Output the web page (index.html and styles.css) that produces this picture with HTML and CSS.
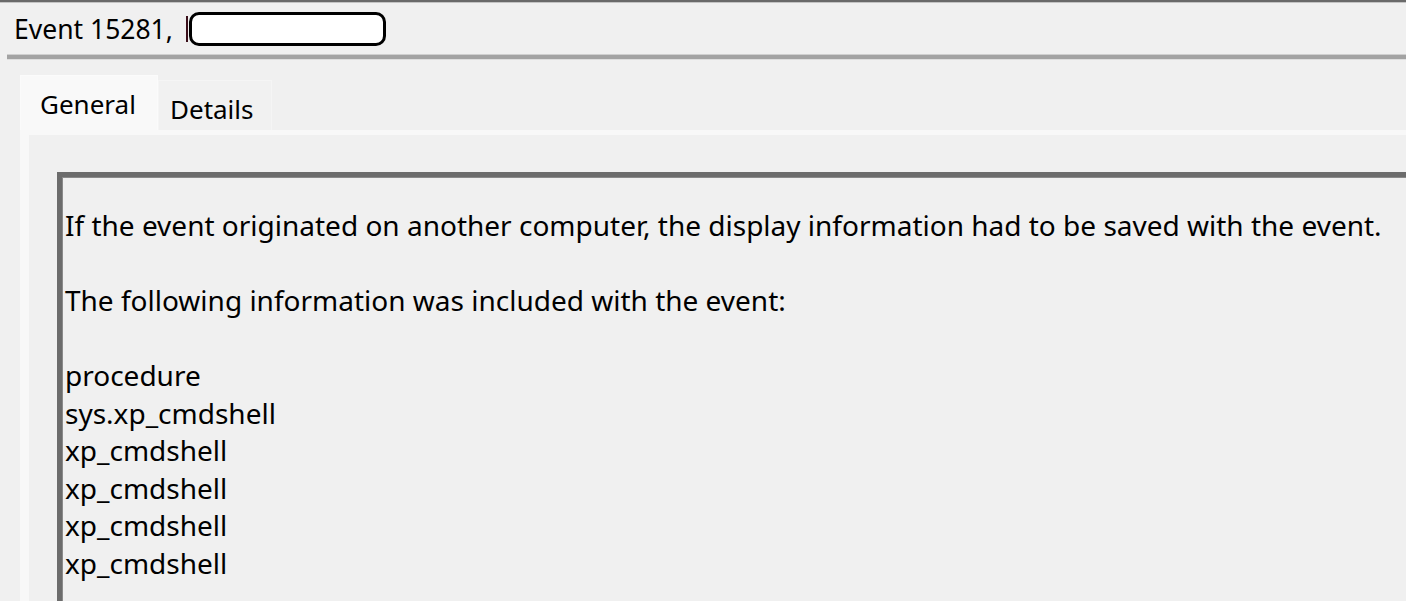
FILE: index.html
```html
<!DOCTYPE html>
<html>
<head>
<meta charset="utf-8">
<link rel="stylesheet" href="styles.css">
</head>
<body>
<div class="topline"></div>
<div class="title">
  <span class="title-text">Event 15281, </span><span class="cursor"></span><span class="redact"></span>
</div>
<div class="sep"></div>
<div class="tabs">
  <div class="tab active">General</div>
  <div class="tab">Details</div>
</div>
<div class="panel">
  <div class="textbox">
    <p class="line spacer">&nbsp;</p>
    <p class="line">If the event originated on another computer, the display information had to be saved with the event.</p>
    <p class="line">&nbsp;</p>
    <p class="line">The following information was included with the event:</p>
    <p class="line">&nbsp;</p>
    <p class="line">procedure</p>
    <p class="line">sys.xp_cmdshell</p>
    <p class="line">xp_cmdshell</p>
    <p class="line">xp_cmdshell</p>
    <p class="line">xp_cmdshell</p>
    <p class="line">xp_cmdshell</p>
  </div>
</div>
</body>
</html>
```
FILE: styles.css
```css
html, body {
  margin: 0;
  padding: 0;
  background: #f0f0f0;
  overflow: hidden;
  height: 601px;
  font-family: "Noto Sans", "Open Sans", sans-serif;
  color: #000;
}
body {
  display: flex;
  flex-direction: column;
}
.topline {
  height: 2px;
  background: #6a6a6a;
  border-bottom: 1px solid #c4c4c4;
  flex: none;
}
.title {
  height: 51px;
  display: flex;
  align-items: center;
  padding-left: 14px;
  font-size: 26.5px;
  flex: none;
}
.title-text {
  white-space: pre;
}
.cursor {
  width: 2px;
  height: 26px;
  background: #3a0f1a;
  margin-left: 6px;
}
.redact {
  width: 191px;
  height: 28px;
  border: 3px solid #000;
  border-radius: 10px;
  background: #fff;
  margin-left: 1px;
}
.sep {
  margin-left: 7px;
  height: 4px;
  background: #a3a3a3;
  border-top: 1px solid #cfcfcf;
  border-bottom: 1px solid #dedede;
  flex: none;
}
.tabs {
  display: flex;
  align-items: flex-end;
  padding-left: 20px;
  margin-top: 15px;
  height: 55px;
  flex: none;
}
.tab {
  font-size: 26px;
  box-sizing: border-box;
}
.tab.active {
  width: 138px;
  height: 55px;
  background: #f9f9f9;
  border: 1px solid #fbfbfb;
  border-bottom: none;
  padding: 10px 0 0 19px;
}
.tab:not(.active) {
  width: 114px;
  height: 50px;
  border: 1px solid #f5f5f5;
  border-bottom: none;
  padding: 10px 0 0 11px;
  background: #f1f1f1;
}
.panel {
  margin-left: 20px;
  border-top: 5px solid #f8f8f8;
  border-left: 9px solid #f8f8f8;
  padding: 37px 0 0 28px;
  flex: 1;
  min-height: 0;
  display: flex;
  flex-direction: column;
}
.textbox {
  border-top: 5px solid #6c6c6c;
  border-left: 5px solid #6c6c6c;
  box-shadow: inset 1px 1px 0 #8a8a8a;
  padding: 0 0 0 3px;
  flex: 1;
  min-height: 0;
  overflow: hidden;
  font-size: 28px;
}
.line {
  margin: 0;
  line-height: 37.5px;
  height: 37.5px;
  white-space: pre;
}
.line.spacer {
  height: 30px;
}
```
